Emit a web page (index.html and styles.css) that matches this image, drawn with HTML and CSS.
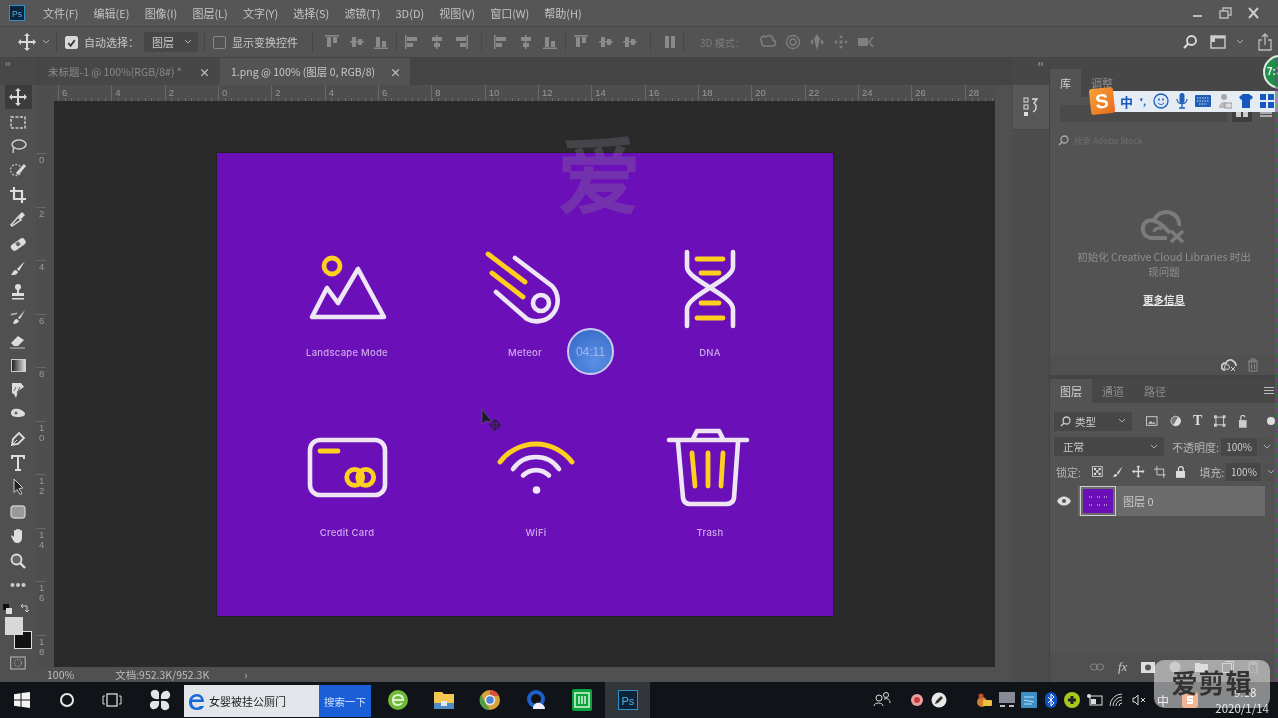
FILE: index.html
```html
<!DOCTYPE html>
<html lang="zh">
<head>
<meta charset="utf-8">
<title>Photoshop</title>
<link rel="stylesheet" href="styles.css">
</head>
<body>
<div class="app">
  <header class="menubar">
    <svg class="pslogo" width="16" height="16" viewBox="0 0 16 16"><rect width="16" height="16" fill="#0d2438"/><rect x=".5" y=".5" width="15" height="15" fill="none" stroke="#2f8fc8"/><text x="3" y="11.5" font-size="8.5" fill="#4fb2e8" font-family="Liberation Sans">Ps</text></svg>
    <nav class="menu">
      <span>文件(F)</span><span>编辑(E)</span><span>图像(I)</span><span>图层(L)</span><span>文字(Y)</span><span>选择(S)</span><span>滤镜(T)</span><span>3D(D)</span><span>视图(V)</span><span>窗口(W)</span><span>帮助(H)</span>
    </nav>
    <div class="winctl">
      <svg width="16" height="14" viewBox="0 0 16 14"><path d="M3 10h9" stroke="#bbb" stroke-width="2"/></svg>
      <svg width="16" height="14" viewBox="0 0 16 14"><path d="M5 5V2h8v7h-3M2 5h8v7H2z" fill="none" stroke="#bbb" stroke-width="1.4"/></svg>
      <svg width="16" height="14" viewBox="0 0 16 14"><path d="M3 2l9 10M12 2L3 12" stroke="#ccc" stroke-width="2"/></svg>
    </div>
  </header>

  <section class="optbar">
    <svg class="opt-move" width="18" height="18" viewBox="0 0 18 18"><use href="#i-move"/></svg>
    <svg class="chev" width="8" height="6" viewBox="0 0 8 6"><path d="M1 1l3 3 3-3" fill="none" stroke="#aaa"/></svg>
    <span class="sep"></span>
    <span class="check on"><svg width="12" height="12" viewBox="0 0 12 12"><path d="M2.5 6l2.5 3 4.5-6" fill="none" stroke="#333" stroke-width="2"/></svg></span>
    <span class="optlabel">自动选择：</span>
    <span class="select"><span>图层</span><svg width="8" height="6" viewBox="0 0 8 6"><path d="M1 1l3 3 3-3" fill="none" stroke="#aaa"/></svg></span>
    <span class="sep"></span>
    <span class="check"></span>
    <span class="optlabel">显示变换控件</span>
    <span class="sep wide"></span>
    <div class="aligns">
      <svg width="14" height="14"><use href="#a-top"/></svg><svg width="14" height="14"><use href="#a-mid"/></svg><svg width="14" height="14"><use href="#a-bot"/></svg>
      <i class="n"></i>
      <svg width="14" height="14"><use href="#a-left"/></svg><svg width="14" height="14"><use href="#a-cen"/></svg><svg width="14" height="14"><use href="#a-right"/></svg>
      <i class="k"></i>
      <svg width="14" height="14"><use href="#a-left"/></svg><svg width="14" height="14"><use href="#a-cen"/></svg><svg width="14" height="14"><use href="#a-bot"/></svg>
      <i class="n"></i>
      <svg width="14" height="14"><use href="#a-top"/></svg><svg width="14" height="14"><use href="#a-mid"/></svg><svg width="14" height="14"><use href="#a-mid"/></svg>
      <i class="k"></i>
      <svg width="14" height="14" viewBox="0 0 14 14"><path d="M2 1h4v12H2zM8 1h4v12H8z" fill="#8a8a8a"/></svg>
    </div>
    <span class="sep"></span>
    <span class="mode3d">3D 模式：</span>
    <div class="icons3d">
      <svg width="18" height="16" viewBox="0 0 18 16"><path d="M3 8a3 3 0 0 1 4-5 4 4 0 0 1 7 3 3 3 0 0 1-1 6H5a3 3 0 0 1-2-4z" fill="none" stroke="#808080" stroke-width="1.5"/></svg>
      <svg width="16" height="16" viewBox="0 0 16 16"><circle cx="8" cy="8" r="6.5" fill="none" stroke="#808080" stroke-width="1.3"/><circle cx="8" cy="8" r="3" fill="none" stroke="#808080" stroke-width="1.3"/></svg>
      <svg width="16" height="18" viewBox="0 0 16 18"><path d="M8 1l3 5-3 11-3-11zM1 9l3-3v6zM15 9l-3-3v6z" fill="#808080"/></svg>
      <svg width="16" height="16" viewBox="0 0 16 16"><path d="M8 1l2 3H6zM8 15l2-3H6zM1 8l3-2v4zM15 8l-3-2v4z" fill="#808080"/><rect x="6.5" y="6.5" width="3" height="3" fill="#808080"/></svg>
      <svg width="18" height="14" viewBox="0 0 18 14"><rect x="1" y="3" width="10" height="8" rx="1" fill="#808080"/><path d="M16 2l-4 5 4 5" fill="none" stroke="#808080" stroke-width="1.4"/></svg>
    </div>
    <div class="optright">
      <svg class="o-search" width="16" height="16" viewBox="0 0 16 16"><circle cx="9.5" cy="6.5" r="4.5" fill="none" stroke="#ddd" stroke-width="1.8"/><path d="M6 10l-4 4" stroke="#ddd" stroke-width="2.2"/></svg>
      <svg width="16" height="14" viewBox="0 0 16 14"><rect x="1" y="1" width="14" height="12" fill="none" stroke="#ccc" stroke-width="1.4"/><rect x="1" y="1" width="14" height="2.5" fill="#ccc"/><rect x="1" y="3" width="4" height="4" fill="#ccc"/></svg>
      <svg class="o-chev" width="8" height="6" viewBox="0 0 8 6"><path d="M1 1l3 3 3-3" fill="none" stroke="#aaa"/></svg>
      <svg width="16" height="18" viewBox="0 0 16 18"><path d="M5 7H2v10h12V7h-3M8 12V2M5 4l3-3 3 3" fill="none" stroke="#bbb" stroke-width="1.3"/></svg>
    </div>
  </section>

  <div class="work">
    <aside class="toolcol">
      <div class="collapse">››</div>
      <div class="tools">
        <span class="tool active"><svg width="18" height="18" viewBox="0 0 18 18"><use href="#i-move"/></svg></span>
        <span class="tool"><svg width="18" height="18" viewBox="0 0 18 18"><rect x="2" y="4" width="14" height="11" fill="none" stroke="#ccc" stroke-width="1.5" stroke-dasharray="3 1.5"/></svg></span>
        <span class="tool"><svg width="18" height="18" viewBox="0 0 18 18"><ellipse cx="10" cy="7.5" rx="7" ry="4.5" fill="none" stroke="#ccc" stroke-width="1.5"/><path d="M5 11c-2 2 0 3-1 5" fill="none" stroke="#ccc" stroke-width="1.5"/></svg></span>
        <span class="tool"><svg width="18" height="18" viewBox="0 0 18 18"><circle cx="7" cy="9" r="5.5" fill="none" stroke="#bbb" stroke-width="1.3" stroke-dasharray="2 1.5"/><path d="M8 13l8-9" stroke="#ddd" stroke-width="3"/></svg></span>
        <span class="tool"><svg width="18" height="18" viewBox="0 0 18 18"><path d="M5 1v12h12M1 5h12v12" fill="none" stroke="#ddd" stroke-width="2.2"/></svg></span>
        <span class="tool"><svg width="18" height="18" viewBox="0 0 18 18"><path d="M3 16l-1-1 7-8 3 3z" fill="none" stroke="#ddd" stroke-width="1.5"/><path d="M9 6l4-4 3 3-4 4z" fill="#ddd"/></svg></span>
        <span class="tool"><svg width="18" height="18" viewBox="0 0 18 18"><rect x="1" y="6" width="16" height="7" rx="3" transform="rotate(-35 9 9)" fill="#ddd"/><rect x="7" y="7" width="4" height="4" fill="#666" transform="rotate(-35 9 9)"/></svg></span>
        <span class="tool"><svg width="18" height="18" viewBox="0 0 18 18"><path d="M16 2L8 10l2 2zM7 11c-3 0-3 3-5 5 3 0 6 0 7-3z" fill="#ddd"/></svg></span>
        <span class="tool"><svg width="18" height="18" viewBox="0 0 18 18"><circle cx="9" cy="4" r="3" fill="#ddd"/><path d="M8 6h2v4h5v3H3v-3h5zM3 15h12v1.5H3z" fill="#ddd"/></svg></span>
        <span class="tool"><svg width="18" height="18" viewBox="0 0 18 18"><path d="M16 2L9 10l2 1zM8 11c-3 0-3 3-4 5 3 0 5-1 6-3z" fill="#ddd"/><path d="M2 7c2-2 4 0 6-2" fill="none" stroke="#bbb" stroke-width="1.5"/></svg></span>
        <span class="tool"><svg width="18" height="18" viewBox="0 0 18 18"><path d="M2 11l7-7 6 4-6 6H5z" fill="#ddd"/><path d="M1 16h15" stroke="#bbb"/></svg></span>
        <span class="tool"><span class="gradbox"></span></span>
        <span class="tool"><svg width="18" height="18" viewBox="0 0 18 18"><path d="M3 2h9l3 4-6 4-2 7-2-4-2-1z" fill="#ddd"/><path d="M7 6l-2 4M11 6l-3 6" stroke="#666"/></svg></span>
        <span class="tool"><svg width="18" height="18" viewBox="0 0 18 18"><path d="M2 8c0-4 4-5 8-4 3 1 6 3 6 5s-3 3-7 3-7-1-7-4z" fill="#ddd"/><circle cx="7" cy="8" r="1.5" fill="#666"/></svg></span>
        <span class="tool"><svg width="18" height="18" viewBox="0 0 18 18"><path d="M3 15l1-6 6-6 5 5-6 6z" fill="none" stroke="#ddd" stroke-width="1.8"/><path d="M3 15l5-5" stroke="#ddd"/></svg></span>
        <span class="tool"><svg width="18" height="18" viewBox="0 0 18 18"><path d="M3 5V2h12v3M9 2v14M6 16h6" fill="none" stroke="#ddd" stroke-width="2"/></svg></span>
        <span class="tool"><svg width="18" height="18" viewBox="0 0 18 18"><path d="M5 1l9 9-4 .5 3 5-2 1-3-5-3 3z" fill="#222" stroke="#ccc"/></svg></span>
        <span class="tool"><svg width="18" height="18" viewBox="0 0 18 18"><rect x="2" y="3" width="14" height="12" rx="3" fill="#999" stroke="#ccc" stroke-width="1.3"/></svg></span>
        <span class="tool"><svg width="18" height="18" viewBox="0 0 18 18"><path d="M5 9V4a1 1 0 0 1 2 0V3a1 1 0 0 1 2 0v0a1 1 0 0 1 2 0v1a1 1 0 0 1 2 0v7c0 3-2 5-5 5-2 0-3-1-4-3L2 9c1-1 2 0 3 1z" fill="#ddd"/></svg></span>
        <span class="tool"><svg width="18" height="18" viewBox="0 0 18 18"><circle cx="7.5" cy="7.5" r="5" fill="#666" stroke="#ddd" stroke-width="1.8"/><path d="M11 11l5 5" stroke="#ddd" stroke-width="2.4"/></svg></span>
        <span class="tool"><svg width="18" height="18" viewBox="0 0 18 18"><circle cx="3.5" cy="9" r="2" fill="#ccc"/><circle cx="9" cy="9" r="2" fill="#ccc"/><circle cx="14.5" cy="9" r="2" fill="#ccc"/></svg></span>
      </div>
      <div class="swatches">
        <div class="miniswap"><svg width="28" height="12" viewBox="0 0 28 12"><rect x="0" y="0" width="6" height="6" fill="#111"/><rect x="3" y="4" width="6" height="6" fill="#ddd"/><path d="M18 2h6v6M24 8l-2-2M24 8l2-2M18 2l2-2M18 2l2 2" fill="none" stroke="#ccc"/></svg></div>
        <div class="colors"><span class="bgc"></span><span class="fgc"></span></div>
        <svg class="qmask" width="16" height="14" viewBox="0 0 16 14"><rect x=".7" y="1" width="14.5" height="12" fill="none" stroke="#bbb"/><circle cx="8" cy="7" r="3.5" fill="none" stroke="#aaa" stroke-dasharray="1.5 1"/></svg>
      </div>
    </aside>

    <main class="doc">
      <div class="tabs">
        <span class="tab">未标题-1 @ 100%(RGB/8#) *<b>×</b></span>
        <span class="tab current">1.png @ 100% (图层 0, RGB/8)<b>×</b></span>
      </div>
      <div class="docbody">
        <div class="docview">
          <div class="hruler">
            <span>6</span><span>4</span><span>2</span><span>0</span><span>2</span><span>4</span><span>6</span><span>8</span><span>10</span><span>12</span><span>14</span><span>16</span><span>18</span><span>20</span><span>22</span><span>24</span><span>26</span><span>28</span>
          </div>
          <div class="viewrow">
            <div class="vruler">
              <span>0</span><span>2</span><span>4</span><span>6</span><span>8</span><span>10</span><span>12</span><span>14</span><span>16</span><span>18</span>
            </div>
            <div class="canvas">
              <div class="artboard">
                <div class="ghost">爱</div>
                <div class="icongrid">
                  <figure class="cell">
                    <svg width="100" height="90" viewBox="0 0 100 90"><path d="M15 72h72L61 24 41 58 30 43z" class="w"/><circle cx="35" cy="21" r="8" class="y"/></svg>
                    <figcaption>Landscape Mode</figcaption>
                  </figure>
                  <figure class="cell">
                    <svg width="100" height="90" viewBox="0 0 100 90"><path d="M13 9l37 28M17 28l31 24" class="y"/><path d="M40 13l37 28a21 21 0 0 1-25 33L21 47" class="w"/><circle cx="66" cy="58" r="8" class="w"/></svg>
                    <figcaption>Meteor</figcaption>
                  </figure>
                  <figure class="cell">
                    <svg width="100" height="90" viewBox="0 0 100 90"><path d="M27 7v15c0 13 46 28 46 42v17M73 7v15c0 13-46 28-46 42v17" class="w"/><path d="M37 14h26M41 28h18M41 58h18M37 73h26" class="y"/></svg>
                    <figcaption>DNA</figcaption>
                  </figure>
                  <figure class="cell">
                    <svg width="100" height="90" viewBox="0 0 100 90"><rect x="13" y="15" width="75" height="55" rx="10" class="w"/><path d="M23 26h18" class="y"/><circle cx="57.7" cy="52.3" r="8" class="y"/><circle cx="68.7" cy="52.3" r="8" class="y"/></svg>
                    <figcaption>Credit Card</figcaption>
                  </figure>
                  <figure class="cell shift">
                    <svg width="100" height="90" viewBox="0 0 100 90"><path d="M14 37a45 45 0 0 1 72 0" class="y"/><path d="M27 44a28 28 0 0 1 46 0M37 50.5a18.5 18.5 0 0 1 26 0" class="w"/><circle cx="50.5" cy="65" r="3.8" fill="#f0e8f6"/></svg>
                    <figcaption>WiFi</figcaption>
                  </figure>
                  <figure class="cell">
                    <svg width="100" height="90" viewBox="0 0 100 90"><path d="M9 15h78M33 14l4-8h22l4 8M18 17l5 56q1 6 7 6h36q7 0 8-6l4-56" class="w"/><path d="M32 28l3 33M48 28v33M63 28l-2 33" class="y"/></svg>
                    <figcaption>Trash</figcaption>
                  </figure>
                </div>
              </div>
            </div>
          </div>
        </div>
        <div class="vscroll"></div>
      </div>
      <footer class="status"><span>100%</span><span class="docinfo">文档:952.3K/952.3K</span><span class="more">›</span></footer>
    </main>

    <div class="dock">
      <div class="dockhead"></div>
      <div class="dockbtn">
        <svg width="16" height="20" viewBox="0 0 16 20"><rect x="1" y="1" width="4" height="4" fill="none" stroke="#ddd"/><rect x="1" y="8" width="4" height="4" fill="none" stroke="#ddd"/><rect x="1" y="15" width="4" height="4" fill="#ddd"/><path d="M9 2h5l-3 4c3 2 3 7-1 9" fill="none" stroke="#ddd" stroke-width="1.3"/></svg>
      </div>
    </div>

    <aside class="panels">
      <div class="collapse-r">‹‹</div>
      <section class="library">
        <div class="ptabs"><span class="ptab current">库</span><span class="ptab">调整</span></div>
        <div class="librow"><span class="libinput"></span><span class="viewbtn on"><svg width="12" height="8" viewBox="0 0 12 8"><path d="M0 0h5v8H0zM7 0h5v8H7z" fill="#ccc"/></svg></span><span class="viewbtn"><svg width="12" height="8" viewBox="0 0 12 8"><path d="M0 0h12v2H0zM0 3h12v2H0zM0 6h12v2H0z" fill="#aaa"/></svg></span></div>
        <div class="libsearch"><svg width="11" height="11" viewBox="0 0 11 11"><circle cx="6.5" cy="4.5" r="3.5" fill="none" stroke="#aaa" stroke-width="1.3"/><path d="M4 7l-3 3" stroke="#aaa" stroke-width="1.5"/></svg><span>搜索 Adobe Stock</span></div>
        <div class="libbody">
          <svg width="48" height="36" viewBox="0 0 48 36"><path d="M13 30C5 30 2 24 3 19c1-6 7-8 11-6 2-7 10-11 17-8 6 2 9 8 8 13M14 13c7 1 11 7 16 12M13 30h14" fill="none" stroke="#7c7c7c" stroke-width="4"/><path d="M14 24a5 5 0 0 1 8-3" fill="none" stroke="#7c7c7c" stroke-width="3"/><path d="M31 23l12 11M43 23L31 34" stroke="#7c7c7c" stroke-width="3.5"/></svg>
          <p>初始化 Creative Cloud Libraries 时出<br>现问题</p>
          <a class="more-info">更多信息</a>
        </div>
        <div class="libfoot">
          <svg width="16" height="14" viewBox="0 0 16 14"><path d="M4 12C1 12 0 9 1 7c1-2 3-2 4-2 1-3 5-4 7-2 2 1 3 3 3 5" fill="none" stroke="#ccc" stroke-width="1.8"/><circle cx="6" cy="9" r="2.5" fill="none" stroke="#ccc"/><path d="M10 9l4 4M14 9l-4 4" stroke="#ccc"/></svg>
          <svg width="12" height="14" viewBox="0 0 12 14"><path d="M1 3h10M4 3V1h4v2M2 4h8v9H2z" fill="none" stroke="#888"/><path d="M4.5 6v5M7.5 6v5" stroke="#888"/></svg>
        </div>
      </section>
      <section class="layers">
        <div class="ptabs lp"><span class="ptab current">图层</span><span class="ptab">通道</span><span class="ptab">路径</span><svg class="burger" width="10" height="8" viewBox="0 0 10 8"><path d="M0 .5h10M0 3.5h10M0 6.5h10" stroke="#bbb"/></svg></div>
        <div class="lrow filter">
          <span class="field kind"><svg width="11" height="11" viewBox="0 0 11 11"><circle cx="6.5" cy="4.5" r="3.5" fill="none" stroke="#ccc" stroke-width="1.3"/><path d="M4 7l-3 3" stroke="#ccc" stroke-width="1.5"/></svg><span>类型</span><svg width="8" height="6" viewBox="0 0 8 6"><path d="M1 1l3 3 3-3" fill="none" stroke="#aaa"/></svg></span>
          <svg width="12" height="10" viewBox="0 0 12 10"><rect x=".5" y=".5" width="11" height="9" fill="none" stroke="#ccc"/><path d="M2 8l3-3 2 2 1-1 2 2z" fill="#ccc"/></svg>
          <svg width="12" height="12" viewBox="0 0 12 12"><circle cx="6" cy="6" r="5" fill="#777" stroke="#ccc"/><path d="M6 1a5 5 0 0 1 0 10z" fill="#ddd" transform="rotate(30 6 6)"/></svg>
          <span class="t">T</span>
          <svg width="12" height="12" viewBox="0 0 12 12"><rect x="2" y="2" width="8" height="8" fill="none" stroke="#ccc"/><path d="M0 0h3v3H0zM9 0h3v3H9zM0 9h3v3H0zM9 9h3v3H9z" fill="#ccc"/></svg>
          <svg width="12" height="13" viewBox="0 0 12 13"><rect x="1" y="5" width="8" height="8" fill="#ccc"/><path d="M3 5V2a2 2 0 0 1 4 0" fill="none" stroke="#ccc" stroke-width="1.3"/></svg>
          <span class="dot"></span>
        </div>
        <div class="lrow blend">
          <span class="field mode"><span>正常</span><svg width="8" height="6" viewBox="0 0 8 6"><path d="M1 1l3 3 3-3" fill="none" stroke="#aaa"/></svg></span>
          <span class="lbl">不透明度:</span><span class="pct">100%</span><span class="pctbtn"><svg width="8" height="6" viewBox="0 0 8 6"><path d="M1 1l3 3 3-3" fill="none" stroke="#aaa"/></svg></span>
        </div>
        <div class="lrow lock">
          <span class="lbl">锁定:</span>
          <svg width="11" height="11" viewBox="0 0 11 11"><rect x=".5" y=".5" width="10" height="10" fill="#444" stroke="#ccc"/><path d="M2 2h2.300v2.300H2zM6.700 2H9v2.300H6.700zM4.300 4.300h2.400v2.400H4.300zM2 6.700h2.300V9H2zM6.700 6.700H9V9H6.700z" fill="#ddd"/></svg>
          <svg width="12" height="13" viewBox="0 0 12 13"><path d="M11 1L5 8l1.500 1.500zM4 9c-2 0-2 2-3 3 2 0 4 0 4.500-2z" fill="#ddd"/></svg>
          <svg width="13" height="13" viewBox="0 0 18 18"><use href="#i-move"/></svg>
          <svg width="13" height="12" viewBox="0 0 13 12"><path d="M3 0v9h9M0 3h10v9" fill="none" stroke="#ccc"/></svg>
          <svg width="10" height="12" viewBox="0 0 10 12"><rect y="5" width="10" height="7" fill="#ddd"/><path d="M2.500 5V3a2.500 2.500 0 0 1 5 0v2" fill="none" stroke="#ddd" stroke-width="1.3"/></svg>
          <span class="lbl fill">填充:</span><span class="pct">100%</span><span class="pctbtn"><svg width="8" height="6" viewBox="0 0 8 6"><path d="M1 1l3 3 3-3" fill="none" stroke="#aaa"/></svg></span>
        </div>
        <div class="layer">
          <span class="eye"><svg width="14" height="10" viewBox="0 0 14 10"><path d="M0 5c3-6 11-6 14 0-3 6-11 6-14 0z" fill="#ddd"/><circle cx="7" cy="5" r="2" fill="#555"/></svg></span>
          <div class="layerbar">
            <span class="thumb"><svg width="30" height="24" viewBox="0 0 30 24"><rect width="30" height="24" fill="#6b10b9"/><path d="M6 8h3M14 8h3M21 8h3M6 16h3M14 16h3M21 16h3" stroke="#e8d8f0" stroke-dasharray="1 1"/></svg></span>
            <span>图层 0</span>
          </div>
        </div>
        <div class="layerspace"></div>
        <div class="layfoot">
          <svg width="14" height="8" viewBox="0 0 14 8"><rect x=".5" y="1" width="7" height="6" rx="3" fill="none" stroke="#888"/><rect x="6.500" y="1" width="7" height="6" rx="3" fill="none" stroke="#888"/></svg>
          <em>fx</em>
          <svg width="14" height="11" viewBox="0 0 14 11"><rect width="14" height="11" fill="#ddd"/><circle cx="7" cy="5.500" r="3" fill="#555"/></svg>
          <svg width="12" height="12" viewBox="0 0 12 12"><circle cx="6" cy="6" r="5.500" fill="#999"/></svg>
          <svg width="13" height="10" viewBox="0 0 13 10"><path d="M0 1h5l1 1h7v8H0z" fill="#bbb"/></svg>
          <svg width="12" height="12" viewBox="0 0 12 12"><rect x=".5" y="2.500" width="9" height="9" fill="none" stroke="#aaa"/><path d="M3 .5h8.500V9" fill="none" stroke="#aaa"/></svg>
          <svg width="10" height="12" viewBox="0 0 10 12"><path d="M0 2h10M3 2V0h4v2M1 3h8v9H1z" fill="none" stroke="#888"/></svg>
        </div>
      </section>
    </aside>
  </div>

  <footer class="taskbar">
    <svg class="t-win" width="16" height="16" viewBox="0 0 16 16"><path d="M0 2.300l6.500-1V7.500H0zM7.500 1.100L16 0v7.500H7.500zM0 8.500h6.500v6.200L0 13.700zM7.500 8.500H16V16l-8.500-1.200z" fill="#f4f4f4"/></svg>
    <span class="t-cortana"></span>
    <svg class="t-view" width="20" height="14" viewBox="0 0 20 14"><rect x="5" y="1" width="10" height="12" fill="none" stroke="#ddd" stroke-width="1.3"/><path d="M3 3H1v8h2M17 3h2v8h-2" fill="none" stroke="#ddd"/></svg>
    <svg class="t-pin" width="22" height="22" viewBox="0 0 22 22"><g fill="#e4e4e4"><path d="M10 10C4 11 1 7 2 3c2-3 7-3 8 1z"/><path d="M12 10C11 4 15 1 19 2c3 2 3 7-1 8z"/><path d="M12 12c6-1 9 3 8 7-2 3-7 3-8-1z"/><path d="M10 12c1 6-3 9-7 8-3-2-3-7 1-8z"/></g></svg>
    <div class="t-search">
      <div class="t-box"><svg width="19" height="19" viewBox="0 0 19 19"><path d="M3 10h13c0-5-3-8-7-8S1 5 1 10s3 8 8 8c3 0 6-1 7-4h-4c-1 1-2 1.500-3 1.500-3 0-5-2-5-5.500zm1-2.500C5 5.500 7 4.500 9 4.500s4 1 4 3z" fill="#1668d8"/></svg><span>女婴被挂公厕门</span></div>
      <div class="t-btn">搜索一下</div>
    </div>
    <div class="t-apps">
      <svg width="22" height="24" viewBox="0 0 22 24"><circle cx="11" cy="12" r="10" fill="#6fb83a"/><path d="M5 12h11c0-3-2-5-5-5s-5 2-5 5 2 5 5 5c2 0 3-.5 4-2" fill="none" stroke="#dff2cc" stroke-width="2"/></svg>
      <svg width="22" height="20" viewBox="0 0 22 20"><path d="M1 2h8l2 2h10v15H1z" fill="#f3c74f"/><rect x="1" y="13" width="20" height="6" fill="#4d8cc4"/><rect x="8" y="11" width="6" height="5" fill="#dfe9f2"/></svg>
      <svg width="22" height="22" viewBox="0 0 22 22"><circle cx="11" cy="11" r="10" fill="#d8a237"/><path d="M11 1a10 10 0 0 1 9 6H11z" fill="#d9503f"/><path d="M2 6l5 9 4 6a10 10 0 0 1-9-15z" fill="#4f9e4a"/><circle cx="11" cy="11" r="4.500" fill="#4a86d8" stroke="#eee" stroke-width="1.500"/></svg>
      <svg width="22" height="24" viewBox="0 0 22 24"><circle cx="11" cy="11" r="9" fill="#1e5fcc"/><circle cx="11" cy="11" r="5" fill="#111"/><path d="M8 20c0-4 4-6 7-5s5 3 5 6H8z" fill="#eef"/></svg>
      <svg width="22" height="24" viewBox="0 0 22 24"><rect x="1" y="1" width="20" height="22" rx="2" fill="#0aa33c"/><rect x="4" y="5" width="14" height="14" fill="none" stroke="#d8f5d8" stroke-width="1.500"/><path d="M8 8v8M11 8v8M14 8v8" stroke="#d8f5d8" stroke-width="1.500"/></svg>
    </div>
    <div class="t-ps"><svg width="20" height="20" viewBox="0 0 20 20"><rect width="20" height="20" fill="#0d2438"/><rect x=".5" y=".5" width="19" height="19" fill="none" stroke="#2f8fc8"/><text x="3.500" y="14.500" font-size="11" fill="#4fb2e8" font-family="Liberation Sans">Ps</text></svg></div>
    <div class="t-people">
      <svg width="18" height="16" viewBox="0 0 18 16"><circle cx="6" cy="7" r="3" fill="none" stroke="#ddd"/><path d="M1 15c0-4 9-4 9 0" fill="none" stroke="#ddd"/><circle cx="13" cy="4" r="2.500" fill="none" stroke="#ddd"/><path d="M11 8c3-1 6 0 6 4" fill="none" stroke="#ddd"/></svg>
    </div>
    <div class="t-tray1">
      <svg width="14" height="14" viewBox="0 0 14 14"><circle cx="7" cy="7" r="6" fill="#e8a0a0"/><circle cx="7" cy="7" r="3" fill="#c83c3c"/></svg>
      <svg width="16" height="16" viewBox="0 0 16 16"><circle cx="8" cy="8" r="7.500" fill="#e8e8e8"/><path d="M4 12l1-3 5-5 2 2-5 5z" fill="#333"/></svg>
    </div>
    <div class="t-tray2">
      <svg width="16" height="16" viewBox="0 0 16 16"><ellipse cx="6" cy="10" rx="5" ry="5" fill="#d08030"/><rect x="7" y="8" width="9" height="6" rx="1" fill="#f0c040"/><circle cx="5" cy="4" r="2.500" fill="#c85030"/></svg>
      <svg width="16" height="16" viewBox="0 0 16 16"><rect width="16" height="11" fill="#888a98"/><path d="M1 14h5M10 14h5" stroke="#bbb" stroke-width="2"/></svg>
      <svg width="16" height="16" viewBox="0 0 16 16"><rect width="16" height="16" rx="1" fill="#3c8ec4"/><path d="M3 5h10M3 8l10 2M3 12h8" stroke="#bde" /></svg>
      <svg width="14" height="16" viewBox="0 0 14 16"><rect x="1" width="12" height="16" rx="6" fill="#0f52c8"/><path d="M4 5l6 6-3 3V2l3 3-6 6" fill="none" stroke="#fff"/></svg>
      <svg width="16" height="16" viewBox="0 0 16 16"><circle cx="8" cy="8" r="8" fill="#a8c820"/><path d="M8 4v8M4 8h8" stroke="#222" stroke-width="3"/></svg>
      <svg width="16" height="12" viewBox="0 0 16 12"><rect x="3" y="2" width="12" height="9" fill="none" stroke="#ddd"/><rect x="4" y="5" width="5" height="5" fill="#ddd"/><circle cx="2" cy="2" r="2" fill="#ddd"/></svg>
      <svg width="16" height="14" viewBox="0 0 16 14"><path d="M1 13a12 12 0 0 1 12-12M4 13a9 9 0 0 1 9-9M7 13a6 6 0 0 1 6-6M10 13a3 3 0 0 1 3-3" fill="none" stroke="#ccc"/></svg>
      <svg width="14" height="14" viewBox="0 0 14 14"><path d="M1 5h2l3-3v10L3 9H1z" fill="none" stroke="#ddd"/><path d="M9 5l4 4M13 5L9 9" stroke="#ddd"/></svg>
      <span class="ime">中</span>
      <svg class="t-sg" width="16" height="16" viewBox="0 0 16 16"><rect width="16" height="16" rx="3" fill="#e06c2c"/><path d="M11 5H6v3h4v3H5" fill="none" stroke="#fff" stroke-width="1.800"/></svg>
    </div>
    <div class="t-clock"><span>9:18</span><span>2020/1/14</span></div>
  </footer>

  <div class="timer">04:11</div>
  <svg class="cursor" width="22" height="24" viewBox="0 0 22 24"><path d="M1 1v15l4-3 6 1z" fill="#1a1a22" stroke="#7a5a9a" stroke-width=".6"/><circle cx="14" cy="17" r="4" fill="none" stroke="#222" stroke-width="1.300"/><path d="M14 11v12M8 17h12" stroke="#222"/></svg>
  <div class="sogou">
    <span class="sg-s">S</span>
    <span class="sg-bar">
      <b>中</b><b class="gl">❜,</b>
      <svg width="16" height="16" viewBox="0 0 16 16"><circle cx="8" cy="8" r="7" fill="#dbe6f6" stroke="#1f5fb8" stroke-width="1.300"/><path d="M5 10c2 2 4 2 6 0" fill="none" stroke="#1f5fb8"/><circle cx="6" cy="6.500" r="1" fill="#1f5fb8"/><circle cx="10" cy="6.500" r="1" fill="#1f5fb8"/></svg>
      <svg width="12" height="16" viewBox="0 0 12 16"><rect x="3.500" width="5" height="10" rx="2.500" fill="#1f5fb8"/><path d="M1 6c0 6 10 6 10 0M6 11v4M3 15h6" fill="none" stroke="#1f5fb8" stroke-width="1.300"/></svg>
      <svg width="16" height="12" viewBox="0 0 16 12"><rect width="16" height="12" rx="1" fill="#1f5fb8"/><path d="M2 3h12M2 6h12M4 9h8" stroke="#cfe0f6" stroke-dasharray="1.500 1"/></svg>
      <svg width="14" height="16" viewBox="0 0 14 16"><circle cx="6" cy="4" r="3" fill="#a8a8a8"/><path d="M1 15c0-8 10-8 10 0z" fill="#b8b8b8"/><rect x="7" y="10" width="7" height="5" fill="#ddd" stroke="#999"/></svg>
      <svg width="14" height="14" viewBox="0 0 14 14"><path d="M4 0h6l4 3-2 3-1-1v9H3V5L2 6 0 3z" fill="#1458c0"/></svg>
      <svg width="14" height="14" viewBox="0 0 14 14"><path d="M0 0h6v6H0zM8 0h6v6H8zM0 8h6v6H0zM8 8h6v6H8z" fill="#1458c0"/></svg>
    </span>
  </div>
  <div class="badge">7:3</div>
  <div class="mark">爱剪辑</div>
  <div class="edge"></div>
</div>

<svg class="defs" width="0" height="0" aria-hidden="true">
  <symbol id="i-move" viewBox="0 0 18 18"><path d="M9 0l3 3h-2v5h5V6l3 3-3 3v-2h-5v5h2l-3 3-3-3h2v-5H3v2L0 9l3-3v2h5V3H6z" fill="#d8d8d8"/></symbol>
  <symbol id="a-top" viewBox="0 0 14 14"><path d="M0 0h14v1.500H0zM2 2h4v10H2zM8 2h4v6H8z" fill="#8a8a8a"/></symbol>
  <symbol id="a-mid" viewBox="0 0 14 14"><path d="M0 6h14v1.500H0zM2 2h4v10H2zM8 4h4v6H8z" fill="#8a8a8a"/></symbol>
  <symbol id="a-bot" viewBox="0 0 14 14"><path d="M0 12.500h14V14H0zM2 2h4v10H2zM8 6h4v6H8z" fill="#8a8a8a"/></symbol>
  <symbol id="a-left" viewBox="0 0 14 14"><path d="M0 0h1.500v14H0zM2 2h10v4H2zM2 8h6v4H2z" fill="#8a8a8a"/></symbol>
  <symbol id="a-cen" viewBox="0 0 14 14"><path d="M6 0h1.500v14H6zM2 2h10v4H2zM4 8h6v4H4z" fill="#8a8a8a"/></symbol>
  <symbol id="a-right" viewBox="0 0 14 14"><path d="M12.500 0H14v14h-1.500zM2 2h10v4H2zM6 8h6v4H6z" fill="#8a8a8a"/></symbol>
</svg>
</body>
</html>
```

FILE: styles.css
```css
* { box-sizing: border-box; }
html, body { margin: 0; height: 100%; overflow: hidden; background: #535353; }
body { font-family: "Noto Sans CJK SC", "Noto Sans", sans-serif; }
.defs { position: absolute; }
.app { position: relative; width: 1278px; height: 718px; display: flex; flex-direction: column; overflow: hidden; background: #535353; color: #c8c8c8; font-size: 11px; filter: blur(.45px); }

/* menu */
.menubar { height: 27px; flex: none; display: flex; align-items: center; padding-left: 9px; background: #565656; border-bottom: 1px solid #454545; }
.pslogo { margin-right: 18px; }
.menu { display: flex; gap: 15.1px; color: #c4c4c4; font-size: 11px; }
.winctl { margin-left: auto; display: flex; gap: 12px; padding-right: 16px; height: 100%; align-items: center; }

/* options */
.optbar { height: 31px; flex: none; display: flex; align-items: center; background: #535353; border-bottom: 1px solid #444; padding-left: 18px; }
.chev { margin-left: 6px; }
.sep { width: 1px; height: 20px; background: #464646; margin: 0 6px; }
.sep.wide { margin-left: 14px; }
.check { width: 13px; height: 13px; border: 1px solid #8a8a8a; border-radius: 2px; margin: 0 6px 0 2px; display: flex; flex: none; }
.check.on { background: #d8d8d8; border-color: #d8d8d8; }
.optlabel { color: #c8c8c8; font-size: 11px; }
.select { width: 54px; height: 20px; margin-left: 5px; background: #474747; display: flex; align-items: center; justify-content: space-between; padding: 0 6px 0 8px; }
.aligns { display: flex; align-items: center; gap: 10.5px; margin-left: 6px; }
.aligns i { width: 1px; height: 20px; background: #484848; }
.aligns i.n { margin: 0 -2.5px; }
.aligns i.k { margin: 0 2px; }
.mode3d { color: #7d7d7d; font-size: 10px; margin-left: 10px; }
.icons3d { display: flex; align-items: center; gap: 8px; margin-left: 14px; }
.optright { margin-left: auto; display: flex; align-items: center; gap: 10px; padding-right: 5px; }
.o-search { margin-right: 2px; }
.o-chev { margin-right: 3px; }

/* work area */
.work { flex: 1; min-height: 0; display: flex; }
.toolcol { width: 36px; flex: none; display: flex; flex-direction: column; background: #505050; }
.collapse { height: 27px; font-size: 9px; line-height: 12px; padding-left: 5px; color: #bbb; background: #484848; }
.tools { display: flex; flex-direction: column; align-items: center; }
.tool { width: 27px; height: 24.4px; display: flex; align-items: center; justify-content: center; flex: none; }
.tool.active { background: #3c3c3c; }
.gradbox { width: 15px; height: 13px; background: linear-gradient(90deg, #222, #ddd); border: 1px solid #ccc; }
.swatches { padding: 6px 0 0 3px; }
.miniswap { height: 14px; }
.colors { position: relative; width: 32px; height: 32px; }
.bgc { position: absolute; right: 3px; bottom: 0; width: 18px; height: 18px; background: #111; border: 1px solid #ddd; }
.fgc { position: absolute; left: 2px; top: 0; width: 18px; height: 18px; background: #d8d8d8; }
.qmask { margin: 7px 0 0 7px; display: block; }

.doc { width: 976px; flex: none; display: flex; flex-direction: column; }
.tabs { height: 27px; flex: none; display: flex; padding-left: 4px; background: #444; }
.tab { width: 180px; display: flex; align-items: center; justify-content: space-between; padding: 0 10px 0 8px; color: #8a8a8a; font-size: 10.5px; background: #474747; }
.tab.current { width: 190px; padding: 0 9px 0 11px; background: #535353; color: #c8c8c8; }
.tab b { font-weight: 700; font-size: 11px; color: #c0c0c0; }
.docbody { flex: 1; min-height: 0; display: flex; }
.docview { width: 959px; flex: none; display: flex; flex-direction: column; }
.hruler { height: 16px; flex: none; display: flex; padding-left: 22px; overflow: hidden; background: repeating-linear-gradient(90deg, #6d6d6d 0 1px, transparent 1px 6.67px) 22px 13px / 100% 3px no-repeat, #4e4e4e; }
.hruler span { width: 53.33px; flex: none; padding-left: 3px; font: 9.5px/16px "Liberation Sans", sans-serif; color: #999; border-left: 1px solid #686868; }
.viewrow { flex: 1; min-height: 0; display: flex; }
.vruler { width: 18px; flex: none; padding-top: 52px; overflow: hidden; background: #4e4e4e; }
.vruler span { display: block; height: 53.5px; width: 10px; padding: 1px 0 0 3px; font: 9.5px/10px "Liberation Sans", sans-serif; color: #999; border-top: 1px solid #686868; word-break: break-all; overflow-wrap: anywhere; }
.canvas { flex: 1; min-width: 0; background: #2a2a2a; padding: 52px 0 0 163px; overflow: hidden; }
.vscroll { width: 17px; flex: none; background: #505050; }
.status { height: 15px; flex: none; display: flex; align-items: center; padding-left: 11px; font-size: 10.5px; color: #bcbcbc; background: #505050; }
.docinfo { margin-left: 41px; }
.more { margin-left: 35px; }

/* artboard */
.artboard { position: relative; width: 616px; height: 463px; background: #6b10b9; padding: 92px 0 0 80px; box-shadow: 0 0 0 1px #222; }
.ghost { position: absolute; left: 340px; top: -32px; font-size: 84px; line-height: 100px; font-weight: 700; color: rgba(135, 125, 150, .3); }
.icongrid { display: grid; grid-template-columns: 178px 185px 100px; row-gap: 66px; }
.cell { margin: 0; width: 100px; display: flex; flex-direction: column; align-items: center; }
.cell.shift { margin-left: 11px; }
.cell svg { display: block; }
.cell figcaption { margin-top: 12px; font: 500 9.5px/12px Inter, "Liberation Sans", sans-serif; letter-spacing: .25px; color: #cda9e8; white-space: nowrap; }
.w { fill: none; stroke: #efe6f5; stroke-width: 4.6; stroke-linecap: round; stroke-linejoin: round; }
.y { fill: none; stroke: #ffcf1f; stroke-width: 4.8; stroke-linecap: round; }

/* dock + panels */
.dock { width: 38px; flex: none; background: #4c4c4c; border-right: 1px solid #424242; }
.dockhead { height: 27px; background: #474747; }
.dockbtn { height: 45px; margin-left: 1px; background: #585858; display: flex; align-items: center; justify-content: center; border-bottom: 1px solid #454545; }
.panels { width: 228px; flex: none; position: relative; display: flex; flex-direction: column; background: #535353; }
.collapse-r { height: 11px; flex: none; background: #474747; color: #ccc; font-size: 9px; line-height: 12px; text-indent: -12px; white-space: nowrap; }
.library { height: 310px; flex: none; display: flex; flex-direction: column; background: #535353; border-bottom: 4px solid #444; }
.ptabs { height: 28px; flex: none; display: flex; background: #474747; }
.ptab { padding: 0 10px; display: flex; align-items: center; color: #8d8d8d; font-size: 11px; }
.ptab.current { background: #535353; color: #d0d0d0; }
.librow { height: 22px; flex: none; margin: 5px 0 0 10px; display: flex; align-items: center; }
.libinput { width: 168px; height: 17px; background: #4a4a4a; margin-right: 1px; }
.viewbtn { width: 24px; height: 18px; display: flex; justify-content: center; align-items: center; margin-left: 2px; }
.viewbtn.on { background: #3e3e3e; margin-left: 4px; width: 20px; }
.libsearch { height: 20px; margin: 6px 0 0 8px; flex: none; display: flex; align-items: center; gap: 5px; font-size: 8.5px; color: #6f6f6f; }
.libbody { flex: 1; display: flex; flex-direction: column; align-items: center; padding-top: 58px; }
.libbody p { margin: 5px 0 0; width: 200px; text-align: center; font-size: 10.5px; line-height: 15px; color: #909090; }
.more-info { margin-top: 13px; font-size: 10.5px; font-weight: 700; color: #e6e6e6; text-decoration: underline; }
.libfoot { height: 20px; flex: none; display: flex; justify-content: flex-end; align-items: center; gap: 10px; padding-right: 19px; background: #505050; }
.layers { flex: 1; min-height: 0; display: flex; flex-direction: column; }
.ptabs.lp { height: 24px; align-items: stretch; position: relative; }
.burger { position: absolute; right: 4px; top: 8px; }
.lrow { display: flex; align-items: center; padding-left: 4px; }
.field { height: 19px; background: #474747; display: flex; align-items: center; justify-content: space-between; color: #ccc; padding: 0 6px; font-size: 10.5px; }
.filter { height: 30px; margin-top: 3px; gap: 12px; padding-right: 3px; }
.kind { width: 81px; margin-right: 2px; justify-content: flex-start; gap: 4px; }
.kind svg:last-child { margin-left: auto; }
.filter .t { font: 700 14px "Liberation Serif", serif; color: #ddd; }
.dot { width: 8px; height: 8px; border-radius: 50%; background: #ddd; margin-left: 6px; }
.blend { height: 21px; }
.mode { width: 110px; margin-right: 8px; padding-left: 9px; }
.lbl { font-size: 11px; color: #b4b4b4; white-space: nowrap; }
.pct { width: 36px; height: 18px; margin-left: 2px; background: #474747; color: #ccc; font-size: 10px; display: flex; align-items: center; justify-content: center; }
.pctbtn { width: 15px; height: 18px; margin-left: 2px; background: #505050; display: flex; align-items: center; justify-content: center; }
.lock { height: 29px; gap: 9px; padding-left: 6px; }
.lock .lbl:first-child { margin-right: 2px; }
.lock .fill { margin-left: 5px; }
.lock .pct { margin-left: -7px; }
.lock .pctbtn { margin-left: -7px; }
.layer { height: 30px; flex: none; display: flex; }
.eye { width: 28px; flex: none; display: flex; align-items: center; justify-content: center; }
.layerbar { width: 187px; display: flex; align-items: center; gap: 7px; padding-left: 2px; background: #6b6b6b; color: #c8c8c8; font-size: 11px; }
.thumb { display: flex; padding: 2px; border: 1px solid #d0d0d0; }
.layerspace { flex: 1; }
.layfoot { height: 28px; flex: none; display: flex; align-items: center; gap: 14px; padding: 0 0 2px 40px; background: #505050; }
.layfoot em { font: italic 13px "Liberation Serif", serif; color: #c8c8c8; }

/* taskbar */
.taskbar { height: 36px; flex: none; display: flex; align-items: center; background: #101317; color: #ddd; }
.t-win { margin-left: 14px; }
.t-cortana { width: 14px; height: 14px; margin-left: 30px; border: 2px solid #e8e8e8; border-radius: 50%; }
.t-view { margin-left: 28px; }
.t-pin { margin-left: 27px; }
.t-search { margin-left: 13px; display: flex; height: 32px; align-self: flex-start; margin-top: 3px; }
.t-box { width: 135px; display: flex; align-items: center; gap: 2px; padding-left: 4px; background: #e2e5ea; color: #222; font-size: 11px; }
.t-btn { width: 52px; display: flex; align-items: center; justify-content: center; background: #1b5fd8; color: #cfe0fb; font-size: 10.5px; }
.t-apps { display: flex; align-items: center; gap: 24px; margin-left: 16px; }
.t-ps { width: 45px; height: 36px; margin-left: 12px; display: flex; align-items: center; justify-content: center; background: #31363b; }
.t-people { margin-left: 223px; }
.t-tray1 { display: flex; gap: 7px; align-items: center; margin-left: 19px; }
.t-tray2 { display: flex; gap: 6.5px; align-items: center; margin-left: 29px; }
.ime { font-size: 12px; color: #ddd; margin: 0 1px 0 5px; }
.t-sg { margin-left: 5px; }
.t-clock { position: absolute; right: 9px; bottom: 2px; display: flex; flex-direction: column; align-items: center; font-size: 11.5px; line-height: 16px; color: #ddd; }
.t-clock span:first-child { margin-left: 6px; }

/* overlays */
.timer { position: absolute; left: 567px; top: 328px; width: 47px; height: 47px; border-radius: 50%; display: flex; align-items: center; justify-content: center; border: 2px solid #c7cdf0; background: radial-gradient(circle at 60% 70%, #5c8fe6, #3266c4); color: #9fb9e8; font: 12px "Liberation Sans", sans-serif; }
.cursor { position: absolute; left: 481px; top: 408px; }
.sogou { position: absolute; left: 1090px; top: 88px; display: flex; align-items: center; }
.sg-s { width: 24px; height: 26px; border-radius: 3px; background: linear-gradient(135deg, #f6a23a, #ea6a1a); color: #fff; font: 700 20px/26px "Liberation Sans", sans-serif; text-align: center; transform: rotate(-6deg); position: relative; z-index: 1; }
.sg-bar { width: 170px; height: 21px; background: #e6ecf4; display: flex; align-items: center; gap: 7px; padding-left: 7px; color: #1458c0; font-size: 13px; overflow: hidden; margin-left: -1px; }
.sg-bar b { font-weight: 700; }
.sg-bar .gl { font-size: 9px; }
.badge { position: absolute; left: 1263px; top: 55px; width: 34px; height: 34px; border-radius: 50%; background: #1f8f4a; border: 2px solid #dfe9df; color: #fff; font: 700 10px/30px "Liberation Sans", sans-serif; padding-left: 2px; }
.mark { position: absolute; left: 1154px; top: 660px; width: 116px; height: 48px; border-radius: 10px; background: rgba(255, 255, 255, .5); color: #333; font: 700 26px/50px "Liberation Serif", "Noto Sans CJK SC", serif; letter-spacing: 1px; text-align: center; }
.edge { position: absolute; right: 0; top: 58px; width: 3px; height: 624px; background: repeating-linear-gradient(180deg, #7b3f8e 0 5px, #2d7a46 5px 10px); opacity: .6; }
```
